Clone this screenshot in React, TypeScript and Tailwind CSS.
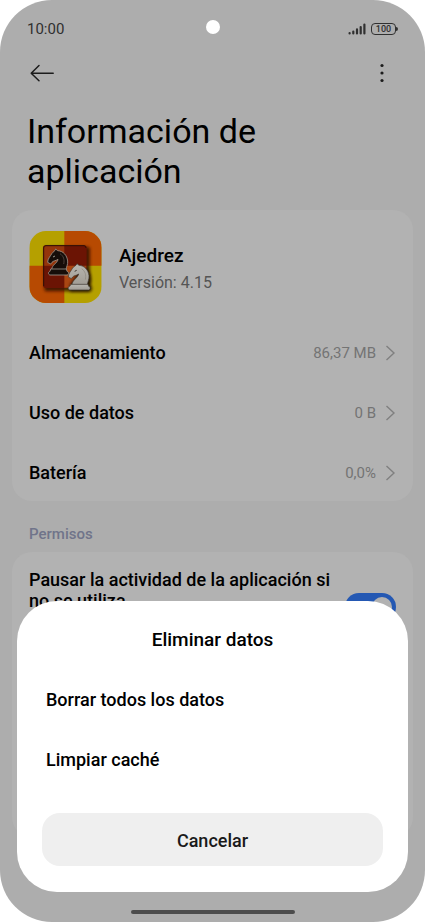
import React, { useState } from 'react';

const details = [
  { label: 'Almacenamiento', value: '86,37 MB' },
  { label: 'Uso de datos', value: '0 B' },
  { label: 'Batería', value: '0,0%' },
];

function StatusBar() {
  return (
    <div className="relative flex h-[57px] items-center justify-between pl-[27px] pr-[27px] text-[#303030]">
      <span className="text-[15px] leading-5">10:00</span>
      <span className="absolute left-1/2 top-5 h-3.5 w-3.5 -translate-x-1/2 rounded-full bg-white" />
      <div className="flex items-center gap-[5px]">
        <svg width="18" height="12" viewBox="0 0 18 12" stroke="currentColor" strokeWidth="2.2" strokeLinecap="round">
          <path d="M1.6 10.4v-.3M5.3 10.4V8.6M9 10.4V6.4M12.7 10.4V4.1M16.4 10.4V1.6" />
        </svg>
        <div className="flex items-center">
          <span className="flex h-3 w-[25px] items-center justify-center rounded-[4px] border border-[#303030] text-[9px] font-medium leading-[10px]">
            100
          </span>
          <span className="h-1 w-0.5 rounded-r-full bg-[#303030]" />
        </div>
      </div>
    </div>
  );
}

function ChessIcon() {
  return (
    <svg className="h-[72px] w-[73px] shrink-0" viewBox="0 0 217 216" aria-hidden="true">
      <defs>
        <clipPath id="tile">
          <rect width="217" height="216" rx="50" />
        </clipPath>
        <linearGradient id="ivory" x1="0" y1="0" x2="0" y2="1">
          <stop offset="0" stopColor="#b8b6b0" />
          <stop offset="1" stopColor="#a19d94" />
        </linearGradient>
        <filter id="soft" x="-20%" y="-20%" width="150%" height="150%">
          <feGaussianBlur stdDeviation="4" />
        </filter>
      </defs>
      <g clipPath="url(#tile)">
        <rect width="217" height="216" fill="#b5a000" />
        <path d="M105 0h112v104H105zM0 104h105v112H0z" fill="#b74a02" />
        <rect x="45" y="47" width="137" height="134" rx="8" fill="#2b1000" opacity=".8" filter="url(#soft)" />
        <rect x="41" y="43" width="131" height="128" rx="8" fill="#6b1404" />
        <path d="M49 44h56v60H42V51q0-7 7-7z" fill="#94350b" />
        <path d="M105 104h66v59q0 7-7 7h-59z" fill="#a94612" />
        <path d="M43 165V51q0-7 7-7h114q6 0 6 7" fill="none" stroke="#301006" strokeWidth="3" />
      </g>
      {/* black knight */}
      <g stroke="#9c958c" strokeWidth="2.5" strokeLinejoin="round">
        <path fill="#160d09" d="M79 54l6 5c17 1 28 14 30 31 1 11-4 18-5 26H67c0-14 17-19 19-31-7 5-14 4-18 9l-4 5-9-5c0-11 8-18 13-27 3-5 9-6 11-13z" />
        <path fill="#160d09" d="M64 114h47l2 7c6 1 6 10 0 11H62c-6-1-6-10 0-11z" />
        <path d="M92 68c11 7 14 18 11 31" fill="none" stroke="#574b44" />
        <path d="M71 78l6-3" strokeWidth="3" />
      </g>
      {/* white knight */}
      <path d="M148 106l6 3c25 3 34 25 31 45l-3 9c8 3 8 17 0 19h-60V161l15-21z" fill="#1a0d00" opacity=".8" filter="url(#soft)" />
      <g stroke="#3d372f" strokeWidth="2" strokeLinejoin="round">
        <path fill="url(#ivory)" d="M143 98l6 5c17 1 28 14 30 31 1 11-4 18-5 28h-46c0-15 17-20 20-33-7 5-14 4-18 9l-4 5-9-5c0-11 8-18 13-27 3-5 10-6 13-13z" />
        <path fill="url(#ivory)" d="M125 160h51l2 6c6 1 6 10 0 11h-57c-6-1-6-10 0-11z" />
        <path d="M157 113c11 8 14 19 11 33" fill="none" stroke="#8c867b" />
        <path d="M136 121l6-3" strokeWidth="3" />
      </g>
    </svg>
  );
}

function DetailRow({ label, value }: { label: string; value: string }) {
  return (
    <button className="flex h-14 w-full items-center text-left">
      <span className="flex-1 text-[18px] font-medium leading-6">{label}</span>
      <span className="text-[15px] leading-5 text-[#747474]">{value}</span>
      <svg className="ml-2.5 text-[#808080]" width="10" height="16" viewBox="0 0 10 16" fill="none" stroke="currentColor" strokeWidth="1.4">
        <path d="M.5 1L8 8 .5 15" />
      </svg>
    </button>
  );
}

function DeleteSheet() {
  return (
    <div role="dialog" aria-labelledby="sheet-title" className="rounded-[40px] bg-white px-[25px] pb-[26px] pt-6">
      <h2 id="sheet-title" className="pb-[15px] text-center text-[19px] font-medium leading-[30px]">
        Eliminar datos
      </h2>
      <button className="flex h-[60px] w-full items-center px-1 text-left text-[18px] font-medium leading-6">
        Borrar todos los datos
      </button>
      <button className="flex h-[60px] w-full items-center px-1 text-left text-[18px] font-medium leading-6">
        Limpiar caché
      </button>
      <button className="mt-[23px] h-[53px] w-full rounded-[18px] bg-[#efefef] pt-0.5 text-[18px] font-medium leading-6 text-[#1a1a1a]">
        Cancelar
      </button>
    </div>
  );
}

export default function App() {
  const [paused, setPaused] = useState(true);

  return (
    <div className="min-h-screen bg-white font-['Roboto',sans-serif] text-black">
      <div className="relative flex min-h-screen flex-col overflow-hidden rounded-[52px] bg-[#adadad]">
        <StatusBar />

        <header>
          <div className="flex h-8 items-center justify-between pl-[30px] pr-[38px] text-[#1c1c1c]">
            <button aria-label="Atrás">
              <svg width="24" height="18" viewBox="0 0 24 18" fill="none" stroke="currentColor" strokeWidth="1.5" strokeLinecap="round" strokeLinejoin="round">
                <path d="M23.2 9.2H1.2M9 1.5L1.2 9.2 9 16.8" />
              </svg>
            </button>
            <button aria-label="Más opciones">
              <svg width="10" height="20" viewBox="0 0 10 20" fill="currentColor">
                <circle cx="5" cy="2.5" r="1.6" />
                <circle cx="5" cy="10" r="1.6" />
                <circle cx="5" cy="17.5" r="1.6" />
              </svg>
            </button>
          </div>
          <h1 className="mt-[22px] px-[27px] text-[34px] leading-10">Información de aplicación</h1>
        </header>

        <main className="px-3 pt-[19px]">
          <section className="rounded-[20px] bg-[#b2b2b2] px-[17px] pt-[21px]">
            <div className="mb-[22px] flex items-center gap-[17px]">
              <ChessIcon />
              <div className="pt-[3px]">
                <p className="text-[19px] font-medium leading-7">Ajedrez</p>
                <p className="text-[16px] leading-[26px] text-[#555]">Versión: 4.15</p>
              </div>
            </div>
            <div className="flex flex-col gap-1">
              {details.map((item) => (
                <DetailRow key={item.label} label={item.label} value={item.value} />
              ))}
            </div>
          </section>

          <h2 className="px-[17px] pb-2 pt-[23px] text-[15px] font-medium leading-5 text-[#70748a]">Permisos</h2>

          <section className="min-h-[285px] rounded-[20px] bg-[#b2b2b2] px-[17px] pt-[17px]">
            <div className="flex items-start justify-between">
              <label htmlFor="pause" className="max-w-[304px] text-[18px] font-medium leading-[21px]">
                Pausar la actividad de la aplicación si no se utiliza
              </label>
              <input
                id="pause"
                type="checkbox"
                checked={paused}
                onChange={(e) => setPaused(e.target.checked)}
                className="mt-6 flex h-7 w-[51px] shrink-0 appearance-none items-center rounded-full bg-[#8a8a8a] px-1 before:h-5 before:w-5 before:rounded-full before:bg-[#b2b2b2] checked:justify-end checked:bg-[#2458b3]"
              />
            </div>
          </section>
        </main>

        <div className="absolute inset-x-[17px] bottom-2 flex flex-col">
          <DeleteSheet />
          <span className="mx-auto mt-[18px] h-1 w-[164px] rounded-full bg-[#4d4d4d]" />
        </div>
      </div>
    </div>
  );
}
